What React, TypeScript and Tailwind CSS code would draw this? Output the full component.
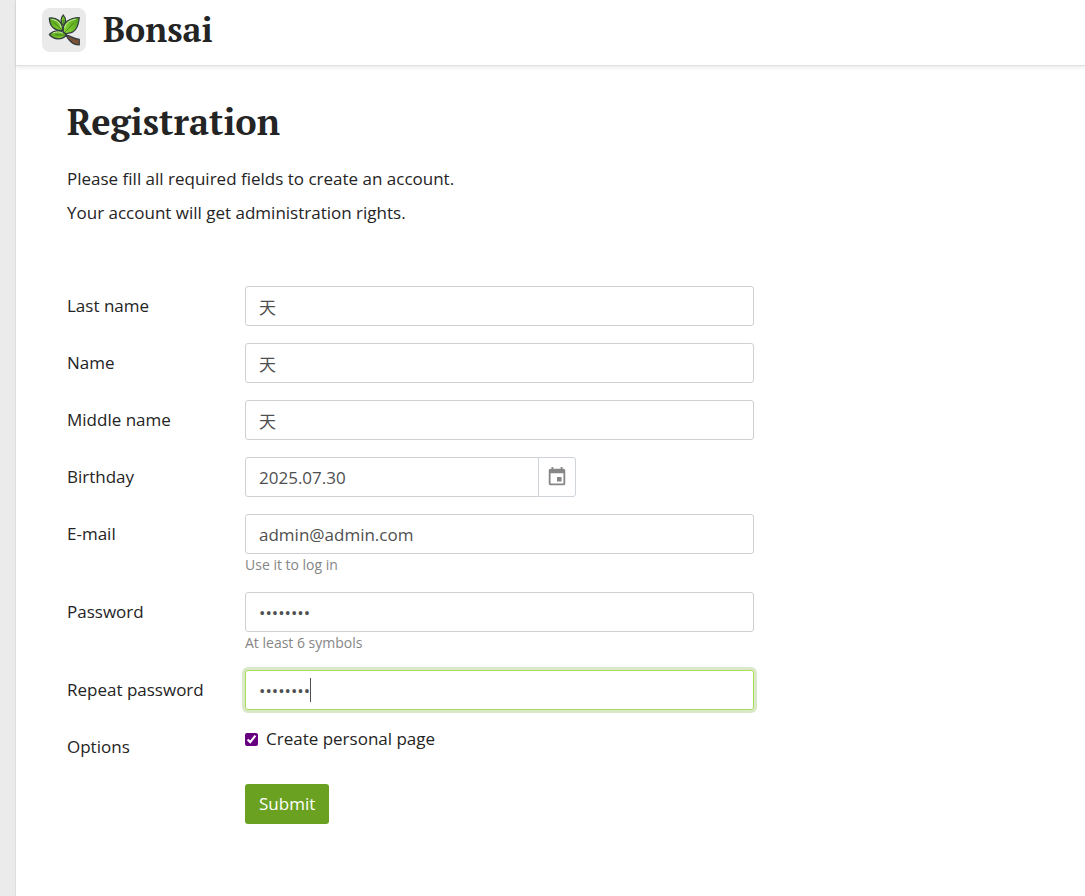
import type { InputHTMLAttributes, ReactNode } from "react";

function Logo() {
  return (
    <svg className="w-11 h-11" viewBox="0 0 44 44" aria-hidden="true">
      <defs>
        <linearGradient id="leaf" x1="0" y1="0" x2="1" y2="1">
          <stop offset="0" stopColor="#4f9c1c" />
          <stop offset="1" stopColor="#86d42c" />
        </linearGradient>
        <linearGradient id="leaf-right" x1="0" y1="1" x2="1" y2="0.4">
          <stop offset="0" stopColor="#8ddb35" />
          <stop offset="1" stopColor="#58a81f" />
        </linearGradient>
      </defs>
      <rect width="44" height="44" rx="8" fill="#eaeaea" />
      <g stroke="#333b40" strokeWidth="1.2" strokeLinejoin="round">
        {/* Branch */}
        <path
          d="M23.5 26.8C28 27 30 31 37.3 31.3V36.8C31 37.3 28.5 33.5 26 30.5Z"
          fill="#7a5236"
        />
        {/* Leaves */}
        <path
          d="M7.3 10C14 9 20.500 13 20.8 22.5C13 23 7.5 19 7.3 10Z"
          fill="url(#leaf)"
        />
        <path
          d="M37.3 9.5C28 9.8 20 14 21.3 23.5C22 25 24 26 26 25.2C34 25 36.5 18 37.3 9.5Z"
          fill="url(#leaf-right)"
        />
        <path
          d="M21.3 7C24.5 11 24.5 14 21.3 17.3C18 14 18 11 21.3 7Z"
          fill="#78c72a"
        />
        <path
          d="M7.3 26.5C12 21.5 20 21.5 24.5 27C20 32.5 12 32 7.3 26.5Z"
          fill="url(#leaf)"
        />
      </g>
      <g fill="none" stroke="#d5f5ae" strokeWidth="0.9" strokeLinecap="round">
        <path d="M10 11.5C14.500 12 18 14.500 19 19" />
        <path d="M33.500 11.3C28 12.500 23.500 15 22.8 19.5" />
        <path d="M11 25C14 23.500 18 23.500 20.500 25" />
      </g>
      <g fill="none" stroke="#33611b" strokeWidth="0.7" strokeLinecap="round">
        <path d="M12.500 15L19.500 21.500" />
        <path d="M31 15.500L23.500 23.500" />
        <path d="M14 27H23" />
        <path d="M21.3 12V16.500" />
      </g>
    </svg>
  );
}

function CalendarIcon() {
  return (
    <svg className="w-[22px] h-[22px]" viewBox="0 0 24 24" fill="#868686" aria-hidden="true">
      <path d="M17 12h-5v5h5v-5zM16 1v2H8V1H6v2H5c-1.11 0-1.99.9-1.99 2L3 19c0 1.1.89 2 2 2h14c1.1 0 2-.9 2-2V5c0-1.1-.9-2-2-2h-1V1h-2zm3 18H5V8h14v11z" />
    </svg>
  );
}

interface RowProps {
  label: string;
  htmlFor?: string;
  hint?: string;
  children: ReactNode;
}

function Row({ label, htmlFor, hint, children }: RowProps) {
  return (
    <div className="flex items-start">
      <label htmlFor={htmlFor} className="w-[178px] shrink-0 py-2 leading-6">
        {label}
      </label>
      <div className="flex-1 min-w-0">
        {children}
        {hint && (
          <p id={`${htmlFor}-hint`} className="text-sm leading-[21px] text-[#868686]">
            {hint}
          </p>
        )}
      </div>
    </div>
  );
}

function TextInput({
  className = "",
  ...props
}: InputHTMLAttributes<HTMLInputElement>) {
  return (
    <input
      {...props}
      className={`block h-10 w-full rounded-[3px] border border-[#d0d0d2] bg-white px-[13px] text-[#4f4f4f] outline-none focus:border-[#a5de5c] focus:ring-3 focus:ring-[#dbe8c8] ${className}`}
    />
  );
}

export default function App() {
  return (
    <div className="flex min-h-screen bg-[#ebebeb] pl-[15px] font-['Open_Sans','Noto_Sans_CJK_SC',sans-serif] text-[17px] text-[#242424]">
      <div className="flex-1 min-w-0 border-l border-[#dedede] bg-white">
        <header className="flex h-[66px] items-start gap-[17px] border-b border-[#dedede] pt-2 pl-[26px] shadow-[0_2px_4px_rgba(0,0,0,0.08)]">
          <Logo />
          <a
            href="#"
            className="font-['PT_Serif','Liberation_Serif',serif] text-[34px] leading-11 font-bold"
          >
            Bonsai
          </a>
        </header>

        <main className="px-[51px] pt-8 pb-12">
          <h1 className="font-['PT_Serif','Liberation_Serif',serif] text-[36px] leading-12 font-bold">
            Registration
          </h1>
          <div className="mt-[21px] space-y-2.5 leading-6">
            <p>Please fill all required fields to create an account.</p>
            <p>Your account will get administration rights.</p>
          </div>

          <form
            className="mt-[61px] max-w-[687px] space-y-[17px]"
            onSubmit={(e) => e.preventDefault()}
          >
            <Row label="Last name" htmlFor="last-name">
              <TextInput id="last-name" defaultValue="天" />
            </Row>
            <Row label="Name" htmlFor="name">
              <TextInput id="name" defaultValue="天" />
            </Row>
            <Row label="Middle name" htmlFor="middle-name">
              <TextInput id="middle-name" defaultValue="天" />
            </Row>
            <Row label="Birthday" htmlFor="birthday">
              <div className="flex max-w-[331px]">
                <TextInput
                  id="birthday"
                  defaultValue="2025.07.30"
                  className="min-w-0 flex-1 rounded-r-none"
                />
                <button
                  type="button"
                  aria-label="Pick a date"
                  className="-ml-px flex h-10 w-[38px] shrink-0 items-center justify-center rounded-r-[3px] border border-[#ced4da] bg-white"
                >
                  <CalendarIcon />
                </button>
              </div>
            </Row>
            <Row label="E-mail" htmlFor="email" hint="Use it to log in">
              <TextInput id="email" type="email" defaultValue="admin@admin.com" />
            </Row>
            <Row label="Password" htmlFor="password" hint="At least 6 symbols">
              <TextInput id="password" type="password" defaultValue="password" />
            </Row>
            <Row label="Repeat password" htmlFor="repeat-password">
              <div className="relative">
                <TextInput
                  id="repeat-password"
                  type="password"
                  defaultValue="password"
                  className="caret-transparent"
                  autoFocus
                />
                {/* Caret */}
                <span
                  className="pointer-events-none absolute top-2 left-[65px] h-6 w-px bg-[#4f4f4f]"
                  aria-hidden="true"
                />
              </div>
            </Row>
            <Row label="Options" htmlFor="create-page">
              <label className="flex items-center gap-2 leading-6">
                <input
                  id="create-page"
                  type="checkbox"
                  defaultChecked
                  className="h-[13px] w-[13px] accent-[#660080]"
                />
                Create personal page
              </label>
            </Row>
            <div className="pl-[178px]">
              <button
                type="submit"
                className="h-10 rounded-[3px] bg-[#6aa121] px-3.5 text-white"
              >
                Submit
              </button>
            </div>
          </form>
        </main>
      </div>
    </div>
  );
}
